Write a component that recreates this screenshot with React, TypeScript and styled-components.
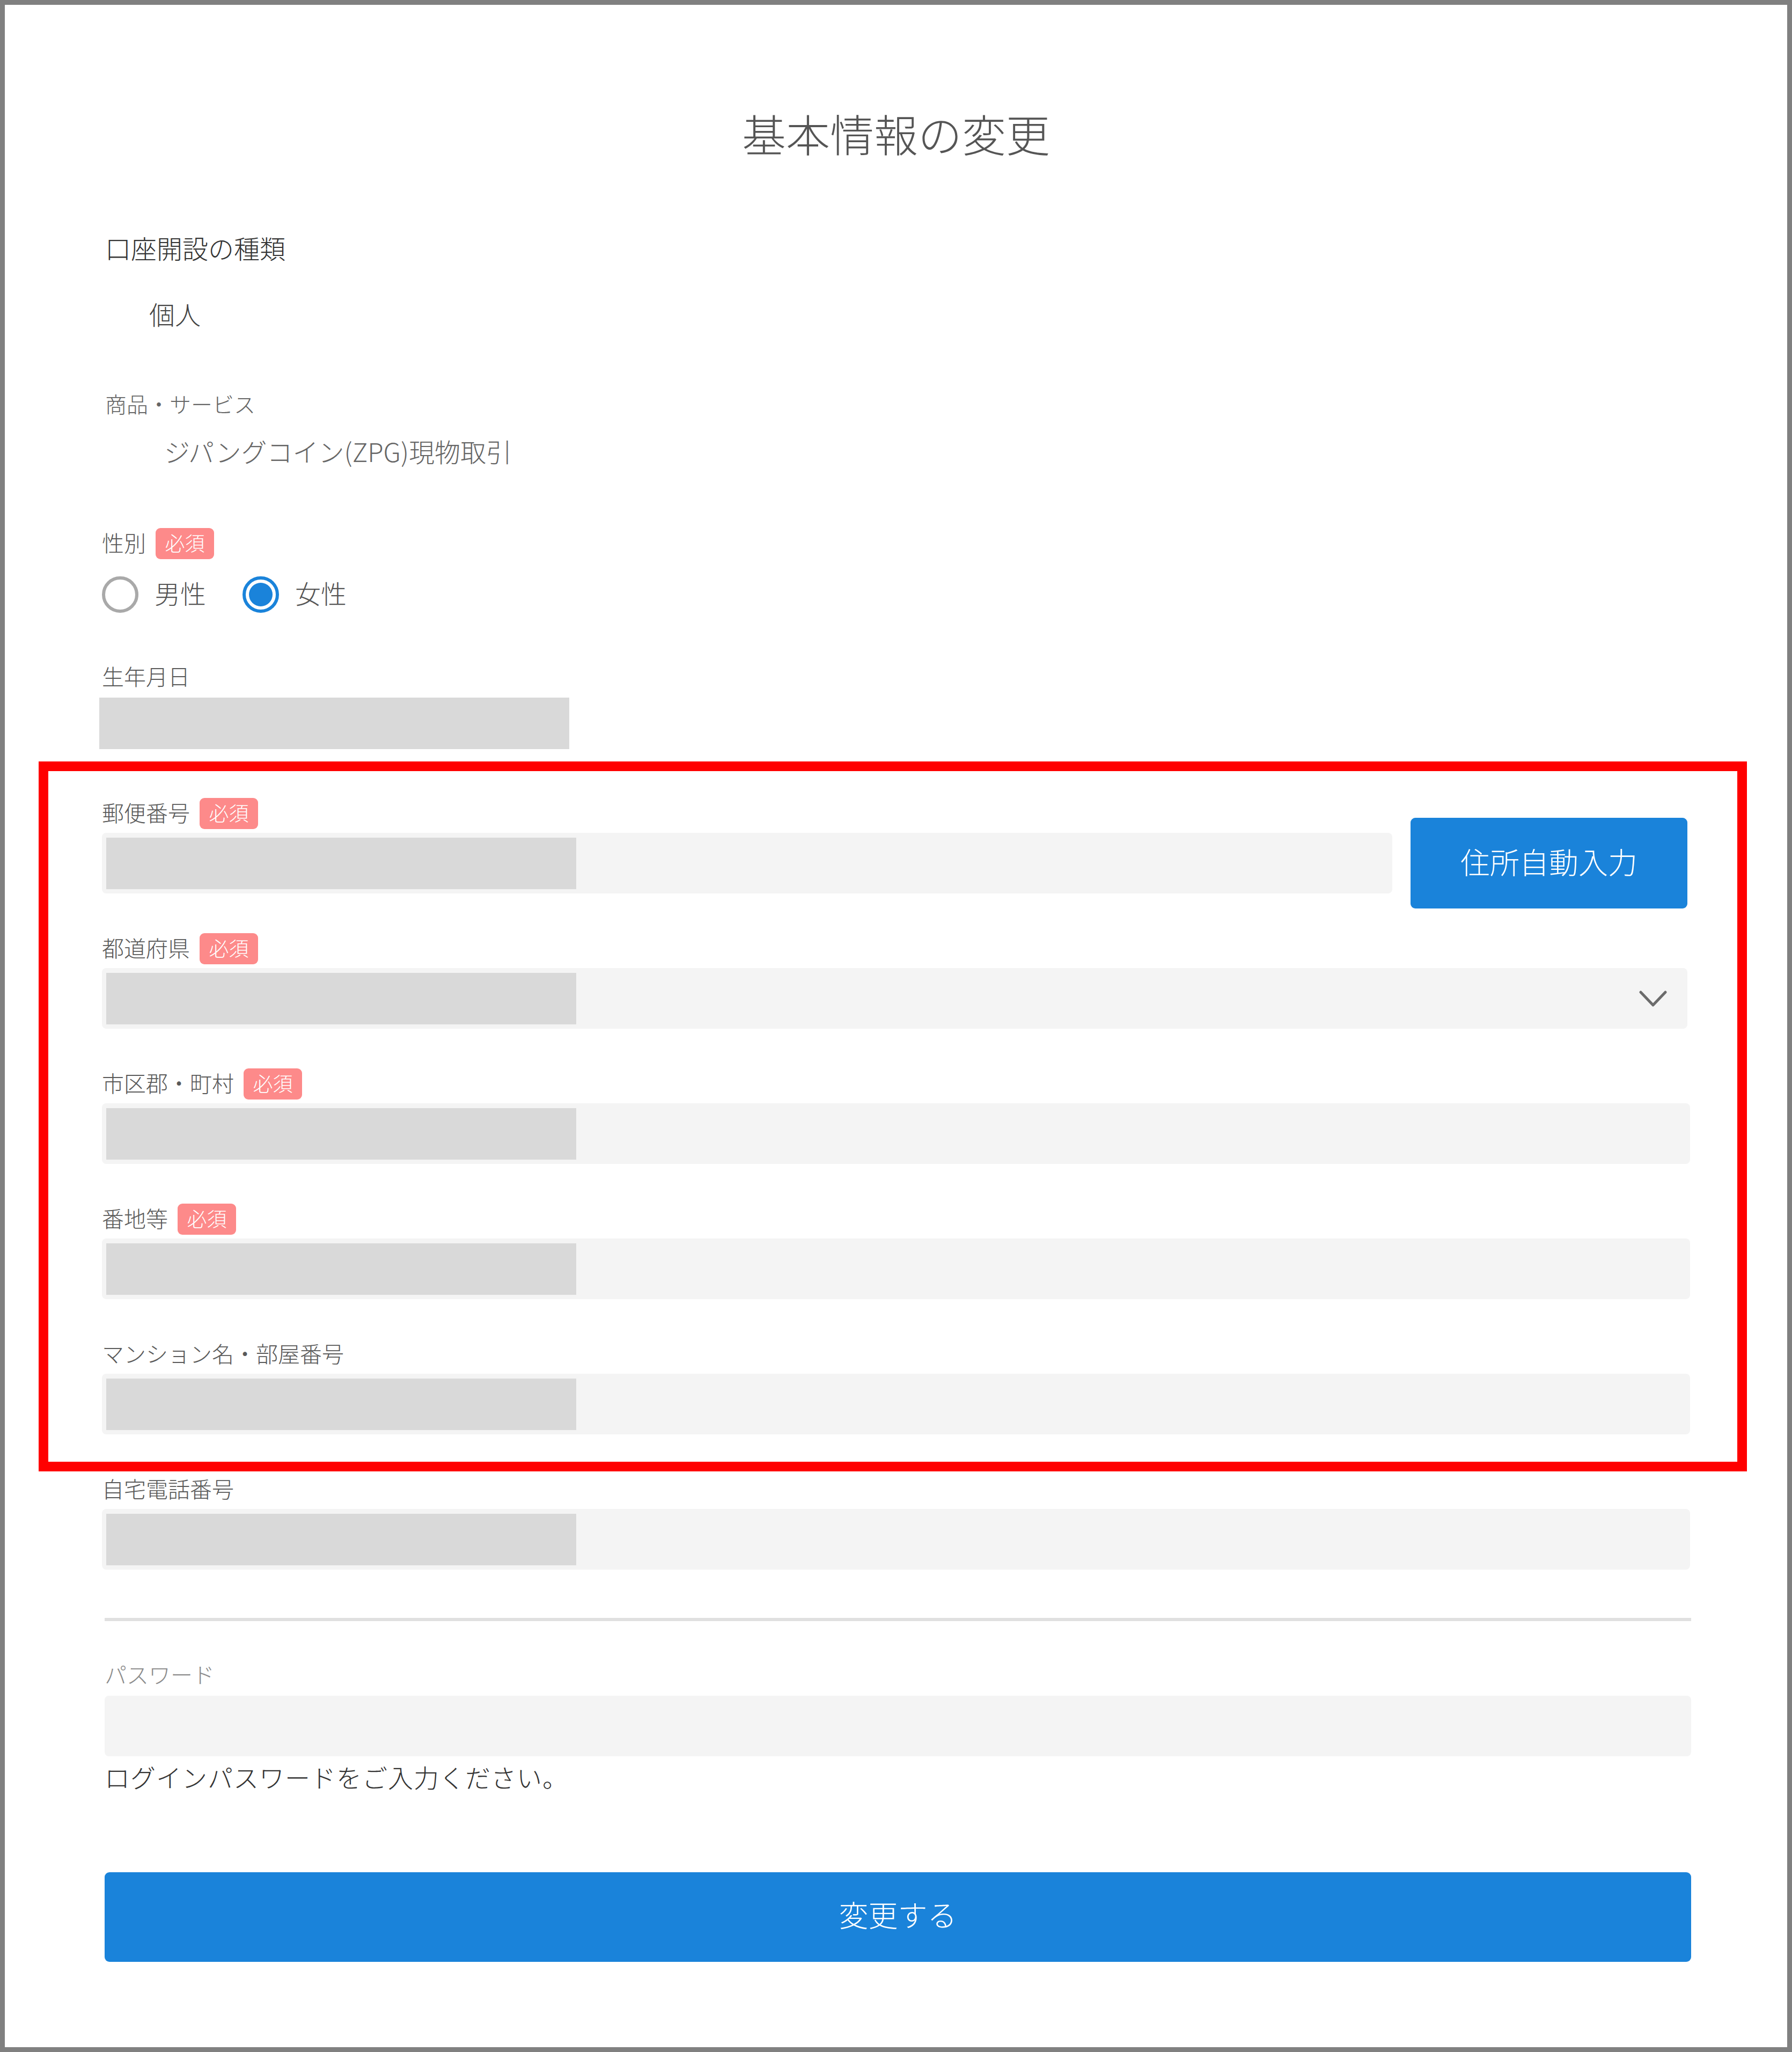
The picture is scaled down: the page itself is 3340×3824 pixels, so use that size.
import * as React from "react";
import styled, { createGlobalStyle } from "styled-components";

const BLUE = "#1a83da";

const GlobalStyle = createGlobalStyle`
  html, body {
    margin: 0;
    padding: 0;
    background: #ffffff;
  }
  body {
    font-family: "Noto Sans CJK JP", "Noto Sans", sans-serif;
    font-weight: 300;
  }
`;

type FieldProps = {
  label: string;
  required?: boolean;
  children: React.ReactNode;
};

const Field = ({ label, required, children }: FieldProps) => (
  <FieldBlock>
    <LabelRow>
      <LabelText>{label}</LabelText>
      {required && <Badge>必須</Badge>}
    </LabelRow>
    {children}
  </FieldBlock>
);

const TextInput = () => (
  <InputBox>
    <Redacted />
  </InputBox>
);

const Chevron = () => (
  <svg width="52" height="30" viewBox="0 0 52 30" fill="none">
    <polyline
      points="3,3 26,27 49,3"
      stroke="#6b6b6b"
      strokeWidth="5"
      strokeLinecap="round"
      strokeLinejoin="round"
    />
  </svg>
);

export default class App extends React.Component {
  render() {
    return (
      <>
        <GlobalStyle />
        <Frame>
          <Title>基本情報の変更</Title>

          <AccountLabel>口座開設の種類</AccountLabel>
          <StaticValue $top={63} $indent={88}>
            個人
          </StaticValue>

          <SmallLabel $top={110}>商品・サービス</SmallLabel>
          <StaticValue $top={30} $indent={116} $tone="#666">
            ジパングコイン(ZPG)現物取引
          </StaticValue>

          <Spacer $h={114} />
          <FieldBlock>
            <LabelRow>
              <LabelText>性別</LabelText>
              <Badge>必須</Badge>
            </LabelRow>
          </FieldBlock>
          <RadioRow>
            <RadioOption>
              <RadioCircle $checked={false} />
              <RadioLabel>男性</RadioLabel>
            </RadioOption>
            <RadioOption>
              <RadioCircle $checked />
              <RadioLabel>女性</RadioLabel>
            </RadioOption>
          </RadioRow>

          <Spacer $h={91} />
          <FieldBlock>
            <LabelRow>
              <LabelText>生年月日</LabelText>
            </LabelRow>
            <DateBox />
          </FieldBlock>

          <AddressGroup>
            <Field label="郵便番号" required>
              <PostalRow>
                <TextInput />
                <AutoButton type="button">住所自動入力</AutoButton>
              </PostalRow>
            </Field>
            <Field label="都道府県" required>
              <SelectBox>
                <Redacted />
                <Chevron />
              </SelectBox>
            </Field>
            <Field label="市区郡・町村" required>
              <TextInput />
            </Field>
            <Field label="番地等" required>
              <TextInput />
            </Field>
            <Field label="マンション名・部屋番号">
              <TextInput />
            </Field>
          </AddressGroup>

          <Spacer $h={74} />
          <Field label="自宅電話番号">
            <TextInput />
          </Field>

          <Divider />

          <PasswordSection>
            <FieldBlock>
              <LabelRow>
                <LabelText $tone="#8c8c8c">パスワード</LabelText>
              </LabelRow>
              <InputBox $gap={2} />
            </FieldBlock>
            <Hint>ログインパスワードをご入力ください。</Hint>
            <SubmitButton type="button">変更する</SubmitButton>
          </PasswordSection>
        </Frame>
      </>
    );
  }
}

const Frame = styled.div`
  box-sizing: border-box;
  width: 3340px;
  height: 3824px;
  border: 9px solid #808080;
  background: #ffffff;
  padding: 0 181px;
  display: flex;
  flex-direction: column;
`;

const Title = styled.h1`
  margin: 194px 0 0;
  font-size: 82px;
  line-height: 90px;
  font-weight: 300;
  color: #555555;
  text-align: center;
`;

const AccountLabel = styled.div`
  margin-top: 138px;
  padding-left: 6px;
  font-size: 48px;
  line-height: 60px;
  color: #333333;
`;

const StaticValue = styled.div<{ $top: number; $indent: number; $tone?: string }>`
  margin-top: ${(p) => p.$top}px;
  padding-left: ${(p) => p.$indent}px;
  font-size: 48px;
  line-height: 60px;
  color: ${(p) => p.$tone || "#444444"};
`;

const SmallLabel = styled.div<{ $top: number }>`
  margin-top: ${(p) => p.$top}px;
  padding-left: 6px;
  font-size: 40px;
  line-height: 56px;
  color: #666666;
`;

const Spacer = styled.div<{ $h: number }>`
  height: ${(p) => p.$h}px;
  flex-shrink: 0;
`;

const FieldBlock = styled.div`
  display: flex;
  flex-direction: column;
  gap: 7px;
`;

const LabelRow = styled.div`
  display: flex;
  align-items: center;
  height: 58px;
  gap: 18px;
`;

const LabelText = styled.span<{ $tone?: string }>`
  font-size: 41px;
  line-height: 58px;
  margin-bottom: 6px;
  color: ${(p) => p.$tone || "#595959"};
`;

const Badge = styled.span`
  display: inline-flex;
  align-items: center;
  justify-content: center;
  box-sizing: border-box;
  width: 109px;
  height: 58px;
  padding-bottom: 4px;
  border-radius: 9px;
  background: #fd8a8a;
  color: #ffffff;
  font-size: 37px;
  line-height: 1;
`;

const RadioRow = styled.div`
  display: flex;
  align-items: center;
  height: 68px;
  margin-top: 32px;
`;

const RadioOption = styled.label`
  display: flex;
  align-items: center;
  gap: 30px;
  margin-right: 68px;
`;

const RadioCircle = styled.span<{ $checked: boolean }>`
  box-sizing: border-box;
  width: 68px;
  height: 68px;
  border-radius: 50%;
  border: 6px solid ${(p) => (p.$checked ? BLUE : "#a9a9a9")};
  padding: 6px;
  background: ${(p) => (p.$checked ? BLUE : "transparent")};
  background-clip: content-box;
`;

const RadioLabel = styled.span`
  font-size: 48px;
  line-height: 60px;
  margin-bottom: 8px;
  color: #555555;
`;

const DateBox = styled.div`
  width: 876px;
  height: 96px;
  margin-left: -5px;
  margin-top: 2px;
  background: #d9d9d9;
`;

const AddressGroup = styled.div`
  position: relative;
  display: flex;
  flex-direction: column;
  gap: 74px;
  margin-top: 91px;

  &::before {
    content: "";
    position: absolute;
    top: -68px;
    bottom: -69px;
    left: -118px;
    right: -106px;
    border: 18px solid #ff0000;
    pointer-events: none;
  }
`;

const InputBox = styled.div<{ $gap?: number }>`
  box-sizing: border-box;
  flex: 1;
  display: flex;
  align-items: center;
  height: 113px;
  min-height: 113px;
  padding: 0 8px;
  margin-top: ${(p) => p.$gap || 0}px;
  background: #f4f4f4;
  border-radius: 8px;
`;

const SelectBox = styled(InputBox)`
  justify-content: space-between;
  padding-right: 38px;
  margin-right: 5px;
`;

const Redacted = styled.div`
  width: 876px;
  height: 96px;
  background: #d9d9d9;
`;

const PostalRow = styled.div`
  display: flex;
  align-items: center;
  gap: 34px;
  margin-right: 5px;
`;

const AutoButton = styled.button`
  box-sizing: border-box;
  flex-shrink: 0;
  width: 516px;
  height: 169px;
  margin: -28px 0;
  border: none;
  border-radius: 9px;
  background: ${BLUE};
  color: #ffffff;
  font-family: inherit;
  font-weight: 300;
  font-size: 55px;
  padding: 0 0 10px;
`;

const Divider = styled.div`
  height: 6px;
  margin: 90px -2px 0 5px;
  background: #e0e0e0;
`;

const PasswordSection = styled.div`
  display: flex;
  flex-direction: column;
  margin: 72px -2px 0 5px;
`;

const Hint = styled.div`
  margin-top: 8px;
  font-size: 47px;
  line-height: 60px;
  letter-spacing: 1px;
  color: #333333;
`;

const SubmitButton = styled.button`
  box-sizing: border-box;
  height: 167px;
  margin-top: 148px;
  border: none;
  border-radius: 9px;
  background: ${BLUE};
  color: #ffffff;
  font-family: inherit;
  font-weight: 300;
  font-size: 55px;
  padding: 0 0 14px;
`;
